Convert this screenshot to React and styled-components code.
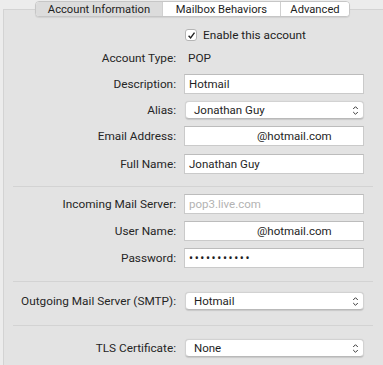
import styled, { createGlobalStyle } from "styled-components";

const Global = createGlobalStyle`
  html, body {
    margin: 0;
    padding: 0;
    background: #ececec;
    width: 383px;
    height: 365px;
    overflow: hidden;
  }
  body {
    font-family: Roboto, "Liberation Sans", sans-serif;
    font-size: 11.5px;
    color: #262626;
  }
`;

const Page = styled.div`
  width: 383px;
  height: 365px;
  padding-top: 1px;
  box-sizing: border-box;
`;

const Tabs = styled.div`
  position: relative;
  z-index: 2;
  display: flex;
  margin-left: 35px;
  width: 315px;
  height: 16px;
  border: 1px solid #c6c6c6;
  border-radius: 4px;
  overflow: hidden;
  background: #fff;
  box-shadow: 0 1px 1px rgba(0, 0, 0, 0.08);
  box-sizing: border-box;
`;

const Tab = styled.div`
  flex: 0 0 ${p => p.w}px;
  display: flex;
  align-items: center;
  justify-content: center;
  font-size: 11.2px;
  color: #1e1e1e;
  background: ${p => (p.active ? "#dcdcdc" : "#fff")};
  border-right: ${p => (p.last ? "none" : "1px solid #d0d0d0")};
  box-sizing: border-box;
`;

const Panel = styled.div`
  margin: -8px 0 0 3px;
  border-top: 1px solid #d3d3d3;
  border-left: 1px solid #d3d3d3;
  background: #e3e3e3;
  height: 360px;
  box-sizing: border-box;
  display: flex;
  flex-direction: column;
`;

const Row = styled.div`
  display: grid;
  grid-template-columns: 172px 180px;
  column-gap: 8px;
  align-items: center;
  height: 20px;
  margin-top: ${p => p.mt}px;
`;

const Label = styled.div`
  text-align: right;
  white-space: nowrap;
  font-size: 11.8px;
  color: #262626;
`;

const Field = styled.div`
  height: 20px;
  box-sizing: border-box;
  background: #fff;
  border: 1px solid #cacaca;
  border-top-color: #bcbcbc;
  display: flex;
  align-items: center;
  padding-left: ${p => p.indent || 4}px;
  color: ${p => (p.muted ? "#b3b3b3" : "#1e1e1e")};
  white-space: nowrap;
`;

const Dots = styled.span`
  font-size: 12px;
  letter-spacing: 1.6px;
  line-height: 1;
`;

const Popup = styled.div`
  height: 18px;
  margin-left: 1px;
  box-sizing: border-box;
  background: #fff;
  border-radius: 4px;
  border: 1px solid #d2d2d2;
  border-bottom-color: #b9b9b9;
  box-shadow: 0 0.5px 1px rgba(0, 0, 0, 0.12);
  display: flex;
  align-items: center;
  justify-content: space-between;
  padding: 0 4px 0 8px;
  color: #1e1e1e;
`;

const Plain = styled.div`
  padding-left: 4px;
  font-size: 11.8px;
  color: #262626;
`;

const CheckRow = styled.label`
  display: flex;
  align-items: center;
  gap: 6px;
  margin: 15px 0 0 181px;
  height: 20px;
  font-size: 11.8px;
  color: #1e1e1e;
`;

const Box = styled.span`
  width: 12px;
  height: 12px;
  box-sizing: border-box;
  border: 1px solid #b5b5b5;
  border-radius: 3px;
  background: #fff;
  display: flex;
  align-items: center;
  justify-content: center;
`;

const Divider = styled.div`
  flex: 0 0 1px;
  margin: ${p => p.mt}px 10px 0 9px;
  background: #d3d3d3;
`;

const Chevrons = () => (
  <svg width="7" height="11" viewBox="0 0 7 11">
    <path d="M1.2 4 L3.5 1.7 L5.8 4 M1.2 7 L3.5 9.3 L5.8 7" fill="none" stroke="#3a3a3a" strokeWidth="1" />
  </svg>
);

export default function App() {
  return (
    <Page>
      <Global />
      <Tabs>
        <Tab w={127} active>Account Information</Tab>
        <Tab w={118}>Mailbox Behaviors</Tab>
        <Tab w={68} last>Advanced</Tab>
      </Tabs>
      <Panel>
        <CheckRow>
          <Box>
            <svg width="9" height="9" viewBox="0 0 9 9">
              <path d="M1.6 4.8 L3.6 7 L7.5 1.6" fill="none" stroke="#222" strokeWidth="1.4" />
            </svg>
          </Box>
          Enable this account
        </CheckRow>
        <Row mt={3}>
          <Label>Account Type:</Label>
          <Plain>POP</Plain>
        </Row>
        <Row mt={6}>
          <Label>Description:</Label>
          <Field>Hotmail</Field>
        </Row>
        <Row mt={6}>
          <Label>Alias:</Label>
          <Popup>Jonathan Guy<Chevrons /></Popup>
        </Row>
        <Row mt={6}>
          <Label>Email Address:</Label>
          <Field indent={72}>@hotmail.com</Field>
        </Row>
        <Row mt={8}>
          <Label>Full Name:</Label>
          <Field>Jonathan Guy</Field>
        </Row>
        <Divider mt={12} />
        <Row mt={7}>
          <Label>Incoming Mail Server:</Label>
          <Field muted>pop3.live.com</Field>
        </Row>
        <Row mt={7}>
          <Label>User Name:</Label>
          <Field indent={72}>@hotmail.com</Field>
        </Row>
        <Row mt={7}>
          <Label>Password:</Label>
          <Field><Dots>•••••••••••</Dots></Field>
        </Row>
        <Divider mt={13} />
        <Row mt={9}>
          <Label>Outgoing Mail Server (SMTP):</Label>
          <Popup>Hotmail<Chevrons /></Popup>
        </Row>
        <Divider mt={14} />
        <Row mt={12}>
          <Label>TLS Certificate:</Label>
          <Popup>None<Chevrons /></Popup>
        </Row>
      </Panel>
    </Page>
  );
}
